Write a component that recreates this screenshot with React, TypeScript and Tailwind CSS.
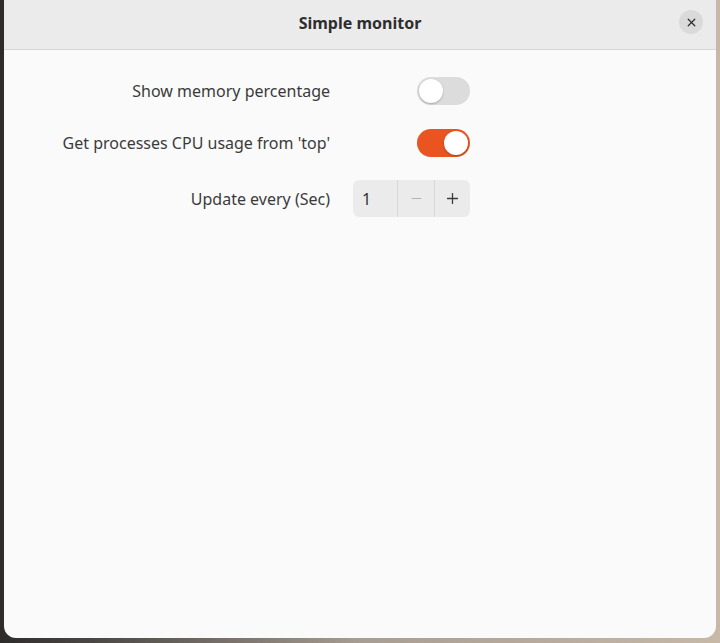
import { Minus, Plus, X } from "lucide-react"

type SwitchProps = { on?: boolean }

// GTK4 / libadwaita style toggle
const Switch = ({ on = false }: SwitchProps) => (
  <div
    className={
      on
        ? "flex h-[28px] w-[53px] items-center justify-end rounded-full bg-[#e95420] px-[2px]"
        : "flex h-[28px] w-[53px] items-center justify-start rounded-full bg-[#dcdcdc] px-[2px]"
    }
  >
    <div className="h-[24px] w-[24px] rounded-full bg-white shadow-[0_1px_2px_rgba(0,0,0,0.25)]" />
  </div>
)

const SpinButton = ({ value = 1 }: { value?: number }) => (
  <div className="flex h-[37px] w-[117px] items-stretch overflow-hidden rounded-[6px] bg-[#ebebeb] text-[16px] text-[#333333]">
    <div className="flex flex-1 items-center pl-[9px]">{value}</div>
    <div className="flex w-[37px] items-center justify-center border-l border-[#d8d8d8] text-[#b4b4b4]">
      <Minus size={15} strokeWidth={1.6} />
    </div>
    <div className="flex w-[36px] items-center justify-center border-l border-[#d8d8d8] text-[#3a3a3a]">
      <Plus size={17} strokeWidth={1.8} />
    </div>
  </div>
)

const rows = [
  { label: "Show memory percentage", control: <Switch />, spacing: "", h: "h-[28px]" },
  { label: "Get processes CPU usage from 'top'", control: <Switch on />, spacing: "mt-[24px]", h: "h-[28px]" },
  { label: "Update every (Sec)", control: <SpinButton value={1} />, spacing: "mt-[23px]", h: "h-[37px]" },
]

export default function App() {
  return (
    <div
      className="flex h-[643px] w-[720px] bg-gradient-to-r from-[#2e2c2b] via-[#a89d92] to-[#c7b8a8] pl-[4px] pr-[4px] pb-[5px]"
      style={{ fontFamily: '"Noto Sans", "Open Sans", sans-serif' }}
    >
      <div className="flex flex-1 flex-col overflow-hidden rounded-b-[12px] bg-[#fafafa]">
        {/* Header bar */}
        <header className="relative flex h-[50px] shrink-0 items-center justify-center border-b border-[#d6d6d6] bg-[#ebebeb] pb-[4px]">
          <span className="text-[16px] font-bold text-[#2e2e2e]">Simple monitor</span>
          <button
            aria-label="Close"
            className="absolute right-[13px] top-[10px] flex h-[24px] w-[24px] items-center justify-center rounded-full bg-[#dadada] text-[#2e2e2e]"
          >
            <X size={13} strokeWidth={2.4} />
          </button>
        </header>

        {/* Preferences grid */}
        <div className="ml-[59px] mt-[27px] grid grid-cols-[267px_117px] gap-x-[23px]">
          {rows.map((row, i) => (
            <div key={i} className="contents">
              <div
                className={`${row.spacing} ${row.h} flex items-center justify-end whitespace-nowrap text-[16px] text-[#3a3a3a]`}
              >
                {row.label}
              </div>
              <div className={`${row.spacing} flex items-center justify-end`}>{row.control}</div>
            </div>
          ))}
        </div>
      </div>
    </div>
  )
}
